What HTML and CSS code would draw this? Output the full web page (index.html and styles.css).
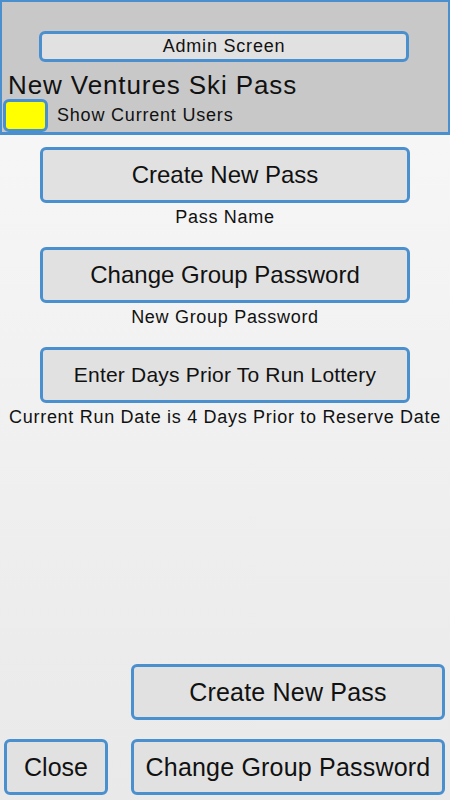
FILE: index.html
```html
<!DOCTYPE html>
<html lang="en">

<head>
  <meta charset="UTF-8" />
  <meta name="viewport" content="width=device-width, initial-scale=1.0" />
  <title>Admin Screen</title>
  <link rel="stylesheet" href="styles.css">
</head>

<body>
  <div class="screen">
    <div class="header">
      <button class="btn btn-admin" type="button">Admin Screen</button>
      <h1 class="title">New Ventures Ski Pass</h1>
      <label class="users">
        <span class="swatch"></span>
        <span>Show Current Users</span>
      </label>
    </div>

    <div class="content">
      <div class="group">
        <button class="btn btn-main" type="button">Create New Pass</button>
        <p class="caption">Pass Name</p>
      </div>
      <div class="group">
        <button class="btn btn-main" type="button">Change Group Password</button>
        <p class="caption">New Group Password</p>
      </div>
      <div class="group">
        <button class="btn btn-main btn-small" type="button">Enter Days Prior To Run Lottery</button>
        <p class="caption">Current Run Date is 4 Days Prior to Reserve Date</p>
      </div>
    </div>

    <div class="footer">
      <div class="row">
        <button class="btn btn-foot" type="button">Create New Pass</button>
      </div>
      <div class="row">
        <button class="btn btn-close" type="button">Close</button>
        <button class="btn btn-foot" type="button">Change Group Password</button>
      </div>
    </div>
  </div>
</body>

</html>
```

FILE: styles.css
```css
* {
  margin: 0;
  padding: 0;
  box-sizing: border-box;
  font-family: 'Liberation Sans', Arial, sans-serif;
}

body {
  width: 450px;
  height: 800px;
  overflow: hidden;
  color: #111;
}

.screen {
  height: 800px;
  display: flex;
  flex-direction: column;
  background: linear-gradient(180deg, #f9f9f9 0%, #e9e9e9 100%);
}

.header {
  height: 135px;
  background-color: #c8c8c8;
  border: 2px solid #4a90cf;
  border-bottom-width: 3px;
  padding-top: 29px;
  display: flex;
  flex-direction: column;
}

.btn {
  background-color: #e1e1e1;
  border: 3px solid #4a90cf;
  border-radius: 6px;
  color: #111;
  cursor: pointer;
}

.btn-admin {
  align-self: center;
  margin-left: -2px;
  width: 370px;
  height: 32px;
  font-size: 18px;
  letter-spacing: 0.8px;
}

.title {
  font-weight: normal;
  font-size: 26px;
  letter-spacing: 0.9px;
  line-height: 30px;
  margin: 8px 0 0 6px;
}

.users {
  display: flex;
  align-items: center;
  gap: 9px;
  margin: -1px 0 0 1px;
  font-size: 18px;
  letter-spacing: 0.8px;
}

.swatch {
  width: 45px;
  height: 33px;
  background-color: #ffff00;
  border: 3px solid #4a90cf;
  border-radius: 6px;
}

.content {
  flex: 1;
  display: flex;
  flex-direction: column;
  align-items: center;
  padding-top: 12px;
  gap: 16px;
}

.group {
  display: flex;
  flex-direction: column;
  align-items: center;
}

.btn-main {
  width: 370px;
  height: 56px;
  font-size: 24px;
}

.btn-small {
  font-size: 21px;
  letter-spacing: 0.2px;
}

.caption {
  font-size: 18px;
  letter-spacing: 0.7px;
  line-height: 28px;
  white-space: nowrap;
}

.footer {
  display: flex;
  flex-direction: column;
  gap: 19px;
  padding: 0 5px 5px 4px;
}

.row {
  display: flex;
  justify-content: flex-end;
  gap: 23px;
}

.btn-foot {
  width: 314px;
  height: 56px;
  font-size: 25px;
  letter-spacing: 0.2px;
}

.btn-close {
  width: 104px;
  height: 56px;
  font-size: 25px;
}
```
